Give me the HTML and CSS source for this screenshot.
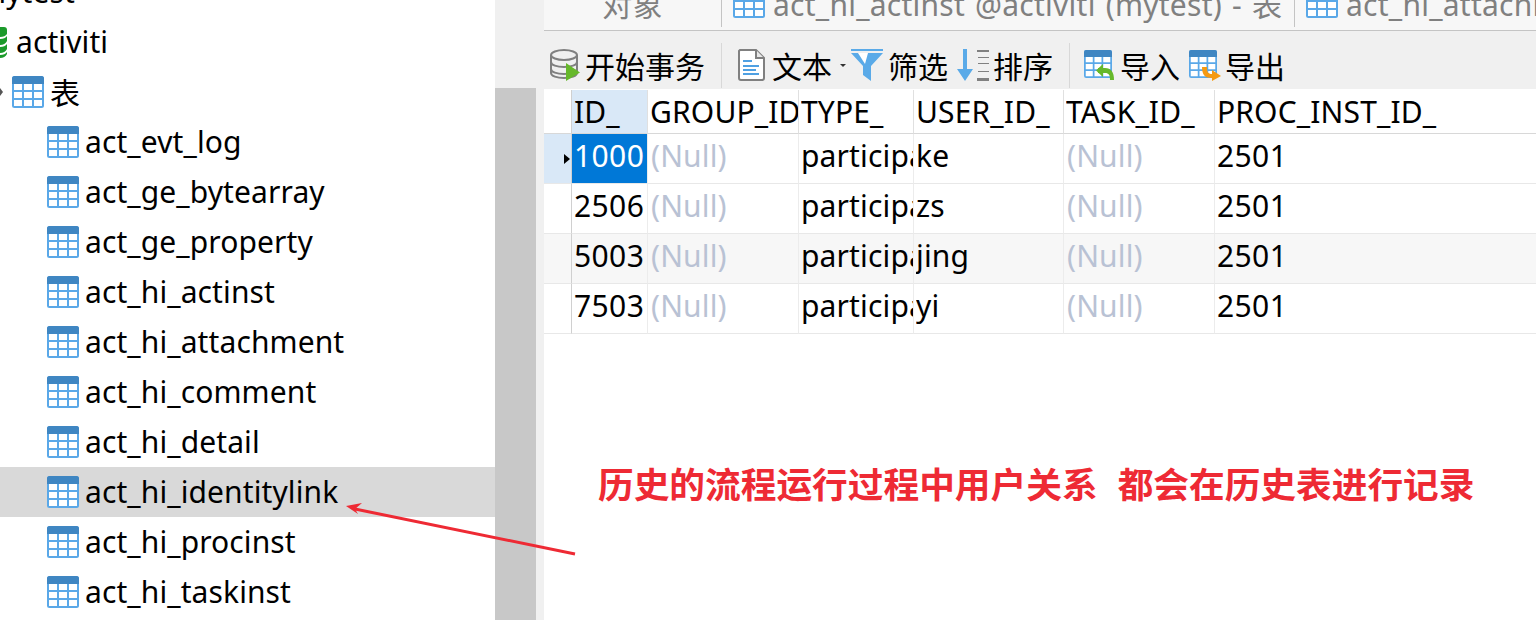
FILE: index.html
```html
<!DOCTYPE html>
<html lang="zh">
<head>
<meta charset="utf-8">
<title>activiti</title>
<link rel="stylesheet" href="styles.css">
</head>
<body>
<svg class="defs" width="0" height="0" aria-hidden="true">
  <defs>
    <symbol id="tbl" viewBox="0 0 32 32">
      <rect x="0" y="0" width="32" height="32" rx="2.5" fill="#5aa8e8"/>
      <path d="M0 8V2.500A2.500 2.500 0 0 1 2.500 0H29.500A2.500 2.500 0 0 1 32 2.500V8Z" fill="#3f86c2"/>
      <g fill="#fff">
        <rect x="2" y="8" width="8" height="6"/><rect x="12" y="8" width="8" height="6"/><rect x="22" y="8" width="8" height="6"/>
        <rect x="2" y="16" width="8" height="6"/><rect x="12" y="16" width="8" height="6"/><rect x="22" y="16" width="8" height="6"/>
        <rect x="2" y="24" width="8" height="6"/><rect x="12" y="24" width="8" height="6"/><rect x="22" y="24" width="8" height="6"/>
      </g>
    </symbol>
  </defs>
</svg>
<div class="app">
  <nav class="tree">
    <div class="node depth-0"><span>mytest</span></div>
    <div class="node depth-db">
      <svg class="db" width="7" height="32" viewBox="0 0 7 32"><path d="M0 1H4Q7 1 7 4V8Q5 11 0 11ZM0 13Q5 13 7 10V15Q5 19 0 19ZM0 21Q5 21 7 18V23Q5 27 0 27ZM0 29Q5 29 7 26V28Q5 32 0 32Z" fill="#1b9a2a"/></svg>
      <span>activiti</span>
    </div>
    <div class="node depth-1">
      <i class="expander"></i>
      <svg class="ico"><use href="#tbl"/></svg><span>表</span>
    </div>
    <div class="node depth-2"><svg class="ico"><use href="#tbl"/></svg><span>act_evt_log</span></div>
    <div class="node depth-2"><svg class="ico"><use href="#tbl"/></svg><span>act_ge_bytearray</span></div>
    <div class="node depth-2"><svg class="ico"><use href="#tbl"/></svg><span>act_ge_property</span></div>
    <div class="node depth-2"><svg class="ico"><use href="#tbl"/></svg><span>act_hi_actinst</span></div>
    <div class="node depth-2"><svg class="ico"><use href="#tbl"/></svg><span>act_hi_attachment</span></div>
    <div class="node depth-2"><svg class="ico"><use href="#tbl"/></svg><span>act_hi_comment</span></div>
    <div class="node depth-2"><svg class="ico"><use href="#tbl"/></svg><span>act_hi_detail</span></div>
    <div class="node depth-2 is-selected"><svg class="ico"><use href="#tbl"/></svg><span>act_hi_identitylink</span></div>
    <div class="node depth-2"><svg class="ico"><use href="#tbl"/></svg><span>act_hi_procinst</span></div>
    <div class="node depth-2"><svg class="ico"><use href="#tbl"/></svg><span>act_hi_taskinst</span></div>
  </nav>
  <div class="scrollbar"><div class="scroll-top"></div><div class="scroll-thumb"></div></div>
  <div class="gutter"></div>
  <main class="main">
    <div class="tabs">
      <div class="tab tab-object"><span>对象</span></div>
      <div class="tab tab-first"><svg class="ico"><use href="#tbl"/></svg><span>act_hi_actinst @activiti (mytest) - 表</span></div>
      <div class="tab tab-last"><svg class="ico"><use href="#tbl"/></svg><span>act_hi_attachment @activiti (mytest) - 表</span></div>
    </div>
    <div class="toolbar">
      <div class="tool tool-begin">
        <svg class="tool-ico" width="30" height="32" viewBox="0 0 30 32">
          <g fill="#f0f0f0" stroke="#808080" stroke-width="2">
            <path d="M1 6V24C1 27 7 29 14 29S27 27 27 24V6"/>
            <ellipse cx="14" cy="6" rx="13" ry="5"/>
            <path d="M1 13C1 16 7 18 14 18S27 16 27 13M1 20C1 23 7 25 14 25S27 23 27 20" fill="none"/>
          </g>
          <path d="M16 14L30 23.500L16 32Z" fill="#66b82a"/>
        </svg>
        <span>开始事务</span>
      </div>
      <div class="sep sep-a"></div>
      <div class="tool tool-text">
        <svg class="tool-ico" width="27" height="32" viewBox="0 0 27 32">
          <path d="M2 1H18L26 9V29Q26 31 24 31H3Q1 31 1 29V2Z" fill="#fff" stroke="#808080" stroke-width="2"/>
          <path d="M18 1V9H26" fill="#e8e8e8" stroke="#808080" stroke-width="2"/>
          <path d="M5 11H14V13H5ZM5 16H21V18H5ZM5 20H18V22H5ZM5 24H21V26H5Z" fill="#4fa0e2"/>
        </svg>
        <span>文本</span>
        <i class="caret"></i>
      </div>
      <div class="tool tool-filter">
        <svg class="tool-ico" width="32" height="32" viewBox="0 0 32 32">
          <path d="M0 0H32V2H0Z" fill="#5aaae8"/>
          <path d="M0 4H32L20 17V32L12 26V17Z" fill="#5aaae8"/>
          <path d="M7 4H17L14 15Z" fill="#fff"/>
        </svg>
        <span>筛选</span>
      </div>
      <div class="tool tool-sort">
        <svg class="tool-ico" width="33" height="32" viewBox="0 0 33 32">
          <path d="M6 0H10V20H16L8 32L0 20H6Z" fill="#5aaae8"/>
          <path d="M20 1H32V3H20ZM21 8H32V9H21ZM21 14H32V15H21ZM21 22H32V23H21ZM20 29H32V32H20Z" fill="#808080"/>
        </svg>
        <span>排序</span>
      </div>
      <div class="sep sep-b"></div>
      <div class="tool tool-import">
        <svg class="tool-ico" width="32" height="32" viewBox="0 0 32 32">
          <use href="#tbl" width="28" height="30"/>
          <path d="M14 19H21C27 19 30 23 30 31H26C26 26 25 24 21 24H14V19Z" fill="#66b82a"/>
          <path d="M12 21.500L19 15V28Z" fill="#66b82a"/>
        </svg>
        <span>导入</span>
      </div>
      <div class="tool tool-export">
        <svg class="tool-ico" width="32" height="32" viewBox="0 0 32 32">
          <use href="#tbl" width="28" height="30"/>
          <path d="M13 18H18C18 23 19 25 23 25V21L32 27L23 32V29C16 29 13 26 13 18Z" fill="#f59a12"/>
        </svg>
        <span>导出</span>
      </div>
    </div>
    <table class="grid">
      <colgroup>
        <col class="c-ind"><col class="c-id"><col class="c-group"><col class="c-type"><col class="c-user"><col class="c-task"><col class="c-proc">
      </colgroup>
      <thead>
        <tr><th class="ind"></th><th class="is-active"><div class="clip">ID_</div></th><th><div class="clip">GROUP_ID_</div></th><th><div class="clip">TYPE_</div></th><th><div class="clip">USER_ID_</div></th><th><div class="clip">TASK_ID_</div></th><th><div class="clip">PROC_INST_ID_</div></th></tr>
      </thead>
      <tbody>
        <tr class="is-current"><td class="ind"><i class="marker"></i></td><td class="num is-focus"><div class="clip">1000</div></td><td class="null"><div class="clip">(Null)</div></td><td><div class="clip">participant</div></td><td><div class="clip">ke</div></td><td class="null"><div class="clip">(Null)</div></td><td class="num"><div class="clip">2501</div></td></tr>
        <tr><td class="ind"></td><td class="num"><div class="clip">2506</div></td><td class="null"><div class="clip">(Null)</div></td><td><div class="clip">participant</div></td><td><div class="clip">zs</div></td><td class="null"><div class="clip">(Null)</div></td><td class="num"><div class="clip">2501</div></td></tr>
        <tr class="is-alt"><td class="ind"></td><td class="num"><div class="clip">5003</div></td><td class="null"><div class="clip">(Null)</div></td><td><div class="clip">participant</div></td><td><div class="clip">jing</div></td><td class="null"><div class="clip">(Null)</div></td><td class="num"><div class="clip">2501</div></td></tr>
        <tr><td class="ind"></td><td class="num"><div class="clip">7503</div></td><td class="null"><div class="clip">(Null)</div></td><td><div class="clip">participant</div></td><td><div class="clip">yi</div></td><td class="null"><div class="clip">(Null)</div></td><td class="num"><div class="clip">2501</div></td></tr>
      </tbody>
    </table>
  </main>
</div>
<div class="note"><span>历史的流程运行过程中用户关系</span><span class="note-tail">都会在历史表进行记录</span></div>
<svg class="arrow" width="240" height="60" viewBox="0 0 240 60">
  <path d="M10 7L230 52" stroke="#ee2a34" stroke-width="3" fill="none"/>
  <path d="M1 4L17 1L10 7L13 12Z" fill="#ee2a34"/>
</svg>
</body>
</html>
```
FILE: styles.css
```css
* { box-sizing: border-box; }
html, body { margin: 0; height: 100%; overflow: hidden; background: #fff; }
body {
  position: relative;
  color: #000;
  font-family: "Noto Sans", "Noto Sans CJK SC", sans-serif;
  font-size: 30px;
}
.defs { position: absolute; }
.app { display: flex; height: 620px; }

/* left tree */
.tree { width: 495px; flex: none; margin-top: -33px; letter-spacing: .1px; }
.node { display: flex; align-items: center; height: 50px; white-space: nowrap; }
.node span { margin-top: -2px; }
.node .ico { width: 32px; height: 32px; flex: none; margin-right: 6px; }
.depth-0 { padding-left: 0; margin-left: -22px; }
.depth-db .db { margin-right: 9px; }
.depth-1 { padding-left: 12px; position: relative; }
.depth-2 { padding-left: 47px; }
.is-selected { background: #d9d9d9; }
.expander {
  position: absolute; left: 0; top: 21px;
  border-left: 3px solid #555; border-top: 4px solid transparent; border-bottom: 4px solid transparent;
}

/* scrollbar */
.scrollbar { width: 41px; flex: none; display: flex; flex-direction: column; background: #f0f0f0; }
.scroll-top { height: 88px; }
.scroll-thumb { flex: 1; background: #c8c8c8; }
.gutter { width: 8px; flex: none; background: #f0f0f0; }

/* main */
.main { flex: 1; min-width: 0; display: flex; flex-direction: column; overflow: hidden; }
.tabs { display: flex; height: 31px; background: #f7f7f7; border-bottom: 1px solid #c4c4c4; overflow: hidden; color: #808080; flex: none; }
.tab { display: flex; align-items: center; flex: none; height: 27px; white-space: nowrap; border-right: 1px solid #c4c4c4; letter-spacing: .25px; word-spacing: 2px; }
.tab > * { transform: translateY(-12px); }
.tab span { position: relative; top: 1px; }
.tab .ico { width: 32px; height: 32px; flex: none; margin-right: 8px; }
.tab-object { width: 178px; justify-content: center; }
.tab-first { width: 573px; padding-left: 11px; }
.tab-last { flex: 1 0 0; padding-left: 11px; border-right: 0; }

.toolbar { display: flex; align-items: flex-start; height: 58px; background: #f0f0f0; padding: 12px 0 0 6px; flex: none; white-space: nowrap; }
.tool { display: flex; align-items: center; height: 44px; position: relative; }
.tool-ico { flex: none; margin-right: 5px; }
.sep { width: 1px; height: 45px; background: #d8d8d8; flex: none; }
.sep-a { margin-left: 16px; margin-right: 16px; }
.sep-b { margin-left: 16px; margin-right: 14px; }
.tool-text .tool-ico { margin-right: 7px; }
.tool-text { margin-right: 19px; }
.tool-filter { margin-right: 9px; }
.tool-sort .tool-ico { margin-right: 3px; }
.tool-import { margin-right: 9px; }
.tool-import .tool-ico, .tool-export .tool-ico { margin-right: 4px; }
.caret {
  position: absolute; left: 102px; top: 21px;
  border-top: 3px solid #333; border-left: 3px solid transparent; border-right: 3px solid transparent;
}

/* data grid */
.grid { border-collapse: separate; border-spacing: 0; table-layout: fixed; width: 100%; flex: none; margin-top: 1px; }
.c-ind { width: 28px; }
.c-id { width: 76px; }
.c-group { width: 151px; }
.c-type { width: 115px; }
.c-user { width: 150px; }
.c-task { width: 151px; }
.grid th, .grid td {
  padding: 0 0 0 2px;
  font-weight: 400;
  text-align: left;
  border-right: 1px solid #ececec;
  border-bottom: 1px solid #e8e8e8;
  overflow: hidden;
  white-space: nowrap;
  letter-spacing: .15px;
}
.grid th { height: 44px; border-bottom-color: #d8d8d8; border-right-color: #e0e0e0; }
.grid td { height: 50px; padding-bottom: 6px; }
.grid th:last-child, .grid td:last-child { border-right: 0; }
.grid .ind { border-right: 1px solid #d0d0d0; padding: 0; }
.clip { overflow: hidden; }
.is-active { background: #d9e8f7; }
.grid .is-current .ind { background: #d9e8f7; padding: 0 1px 0 0; }
.marker { display: block; margin: 0 0 0 auto; width: 0; border-left: 6px solid #000; border-top: 5px solid transparent; border-bottom: 5px solid transparent; }
.grid td.num { letter-spacing: .4px; }
.grid td.is-focus { background: #0078d7; color: #fff; }
.is-alt td { background: #f7f7f7; }
.grid td.null { color: #b9c2d4; padding-left: 3px; }

/* annotation */
.note {
  position: absolute; left: 598px; top: 458px;
  font: 700 35.7px/50px "Noto Sans CJK SC", sans-serif;
  color: #ee2a34; white-space: nowrap;
}
.note-tail { margin-left: 20px; }
.arrow { position: absolute; left: 345px; top: 502px; }
```
